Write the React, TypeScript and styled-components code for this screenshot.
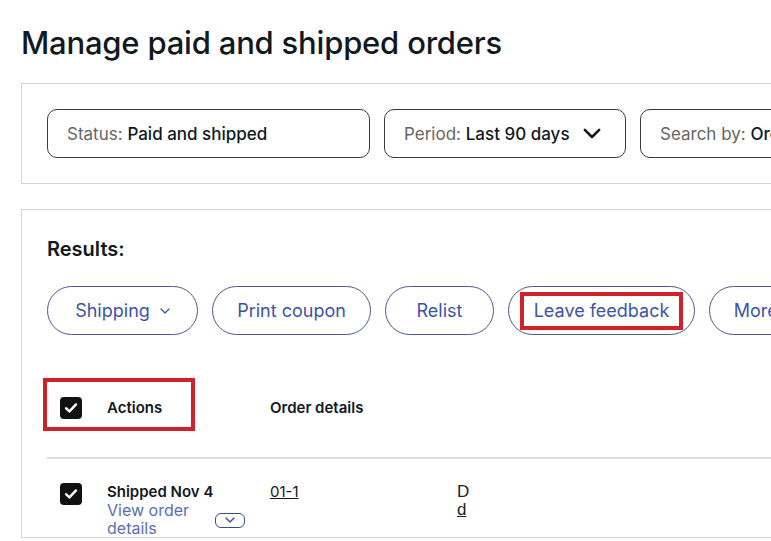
import React from "react";
import styled, { createGlobalStyle } from "styled-components";

const GlobalStyle = createGlobalStyle`
  html, body {
    margin: 0;
    padding: 0;
    background: #ffffff;
    overflow: hidden;
  }
  body {
    font-family: Inter, "Open Sans", Arial, sans-serif;
    color: #111820;
  }
`;

const Page = styled.div`
  width: 960px;
  padding: 24px 0 0 21px;
`;

const Title = styled.h1`
  margin: 0;
  font-size: 31px;
  font-weight: 500;
  letter-spacing: -0.2px;
  line-height: 38px;
  color: #111820;
`;

const Card = styled.section<{ $top: number }>`
  margin-top: ${(p) => p.$top}px;
  border: 1px solid #d4d4d4;
  border-right: none;
`;

const FilterRow = styled.div`
  display: flex;
  gap: 14px;
  padding: 25px 0 25px 25px;
`;

const Filter = styled.div<{ $w: number }>`
  display: flex;
  align-items: center;
  gap: 13px;
  width: ${(p) => p.$w}px;
  height: 49px;
  padding: 0 19px;
  box-sizing: border-box;
  border: 1px solid #3a3a3a;
  border-radius: 10px;
  font-size: 17px;
  white-space: nowrap;
  overflow: hidden;
`;

const FilterLabel = styled.span`
  color: #666666;
`;

const FilterValue = styled.span`
  color: #111820;
  font-weight: 500;
`;

const Results = styled.div`
  padding: 25px 0 0 25px;
`;

const ResultsTitle = styled.h2`
  margin: 0;
  font-size: 20px;
  font-weight: 600;
  line-height: 28px;
`;

const PillRow = styled.div`
  display: flex;
  gap: 14px;
  margin-top: 23px;
`;

const Pill = styled.button<{ $w: number }>`
  display: flex;
  align-items: center;
  justify-content: center;
  gap: 10px;
  flex: none;
  width: ${(p) => p.$w}px;
  height: 49px;
  border: 1px solid #4a5b8c;
  border-radius: 25px;
  background: #ffffff;
  color: #3a55a8;
  font-family: inherit;
  font-size: 18px;
  padding: 0;
  white-space: nowrap;
`;

const Marked = styled.span`
  display: flex;
  align-items: center;
  height: 38px;
  padding: 0 10px;
  box-sizing: border-box;
  border: 4px solid #cf2229;
`;

const Table = styled.div`
  margin-top: 43px;
`;

const HeadRow = styled.div`
  display: flex;
  align-items: center;
  height: 79px;
  border-bottom: 2px solid #dcdcdc;
`;

const HeadMark = styled.div`
  display: flex;
  align-items: center;
  gap: 25px;
  width: 152px;
  height: 53px;
  margin: 0 0 26px -4px;
  padding: 6px 0 0 13px;
  box-sizing: border-box;
  border: 4px solid #cf2229;
`;

const HeadCell = styled.span<{ $ml?: number }>`
  font-size: 15px;
  font-weight: 600;
  margin-left: ${(p) => p.$ml ?? 0}px;
  margin-bottom: ${(p) => (p.$ml ? 20 : 0)}px;
`;

const Row = styled.div`
  display: flex;
  align-items: flex-start;
  padding: 24px 0 0 13px;
`;

const Check = styled.span`
  display: inline-flex;
  align-items: center;
  justify-content: center;
  flex: none;
  width: 22px;
  height: 22px;
  border-radius: 4px;
  background: #111111;
`;

const ActionCell = styled.div`
  display: grid;
  grid-template-columns: 108px 30px;
  width: 163px;
  margin-left: 25px;
`;

const Shipped = styled.div`
  grid-column: 1 / 3;
  font-size: 15px;
  font-weight: 600;
  line-height: 18px;
`;

const ViewLink = styled.a`
  color: #5670b5;
  font-size: 16px;
  line-height: 18px;
  text-decoration: none;
`;

const Expand = styled.span`
  display: inline-flex;
  align-items: center;
  justify-content: center;
  align-self: center;
  width: 30px;
  height: 15px;
  margin-top: 2px;
  border: 1px solid #3a4f86;
  border-radius: 6px;
  box-sizing: border-box;
`;

const OrderId = styled.a`
  width: 187px;
  font-size: 15px;
  color: #111820;
  text-decoration: underline;
  line-height: 18px;
`;

const Buyer = styled.div`
  font-family: Arial, "Liberation Sans", sans-serif;
  font-size: 17px;
  line-height: 18px;
  color: #222222;

  a {
    color: #222222;
    text-decoration: underline;
  }
`;

function CheckMark() {
  return (
    <svg width="14" height="12" viewBox="0 0 14 12">
      <path d="M2 6.2 L5.4 9.4 L12 2.4" fill="none" stroke="#fff" strokeWidth="2.4" strokeLinecap="round" strokeLinejoin="round" />
    </svg>
  );
}

function Chevron({ size, stroke, color }: { size: number; stroke: number; color: string }) {
  return (
    <svg width={size} height={size * 0.6} viewBox="0 0 10 6">
      <path d="M1 1 L5 5 L9 1" fill="none" stroke={color} strokeWidth={stroke} strokeLinecap="round" strokeLinejoin="round" />
    </svg>
  );
}

export default function App() {
  return (
    <>
      <GlobalStyle />
      <Page>
        <Title>Manage paid and shipped orders</Title>
        <Card $top={21}>
          <FilterRow>
            <Filter $w={323}>
              <span>
                <FilterLabel>Status: </FilterLabel>
                <FilterValue>Paid and shipped</FilterValue>
              </span>
            </Filter>
            <Filter $w={242}>
              <span>
                <FilterLabel>Period: </FilterLabel>
                <FilterValue>Last 90 days</FilterValue>
              </span>
              <Chevron size={18} stroke={1.4} color="#111820" />
            </Filter>
            <Filter $w={260}>
              <span>
                <FilterLabel>Search by: </FilterLabel>
                <FilterValue>Order number</FilterValue>
              </span>
            </Filter>
          </FilterRow>
        </Card>
        <Card $top={25}>
          <Results>
            <ResultsTitle>Results:</ResultsTitle>
            <PillRow>
              <Pill $w={151}>
                Shipping
                <Chevron size={10} stroke={1.3} color="#3a55a8" />
              </Pill>
              <Pill $w={159}>Print coupon</Pill>
              <Pill $w={109}>Relist</Pill>
              <Pill $w={187}>
                <Marked>Leave feedback</Marked>
              </Pill>
              <Pill $w={160}>More actions</Pill>
            </PillRow>
            <Table>
              <HeadRow>
                <HeadMark>
                  <Check>
                    <CheckMark />
                  </Check>
                  <HeadCell>Actions</HeadCell>
                </HeadMark>
                <HeadCell $ml={75}>Order details</HeadCell>
              </HeadRow>
              <Row>
                <Check>
                  <CheckMark />
                </Check>
                <ActionCell>
                  <Shipped>Shipped Nov 4</Shipped>
                  <ViewLink>View order details</ViewLink>
                  <Expand>
                    <Chevron size={10} stroke={1.4} color="#3a4f86" />
                  </Expand>
                </ActionCell>
                <OrderId>01-1</OrderId>
                <Buyer>
                  D
                  <br />
                  <a>d</a>
                </Buyer>
              </Row>
            </Table>
          </Results>
        </Card>
      </Page>
    </>
  );
}
